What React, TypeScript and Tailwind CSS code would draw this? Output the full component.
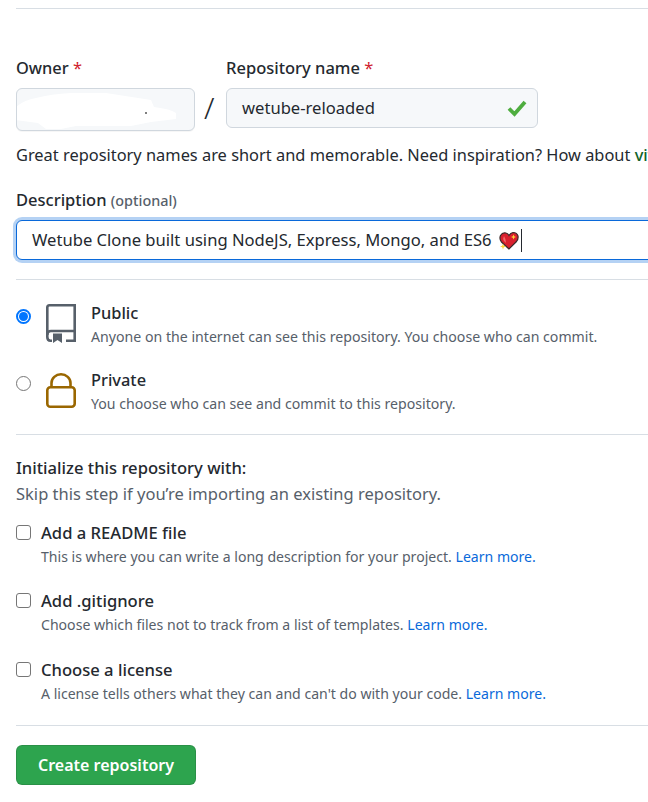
function BookIcon() {
  return (
    <svg width="30" height="39" viewBox="0 0 30 39" fill="none" className="shrink-0">
      <path d="M1.300 31V3.500Q1.300 1.300 3.500 1.300H28.700V36.700H20" stroke="#57606a" strokeWidth="2.600" />
      <path d="M1.300 31Q1.300 27 5 27H28.700" stroke="#57606a" strokeWidth="2.600" />
      <path d="M1.300 31V33Q1.300 36.700 4.500 36.700H6" stroke="#57606a" strokeWidth="2.600" />
      <path d="M7 29.500H16V39L11.500 36L7 39Z" fill="#57606a" />
    </svg>
  )
}

function LockIcon() {
  return (
    <svg width="30" height="35" viewBox="0 0 30 35" fill="none" className="shrink-0">
      <path d="M5.500 14V10A9.500 8.700 0 0 1 24.500 10V14" stroke="#9a6700" strokeWidth="2.600" />
      <rect x="1.300" y="14.300" width="27.400" height="19.400" rx="3" stroke="#9a6700" strokeWidth="2.600" />
    </svg>
  )
}

function Heart() {
  return (
    <svg width="20" height="19" viewBox="0 0 20 19" className="shrink-0">
      <path d="M10 18L2.500 11Q0 8 1.500 4.500Q3.500 1 7 2Q9 2.500 10 4.500Q11.500 2 14 1.500Q18 1.500 19 5Q19.500 8 17.500 10.500Z" fill="#d9202e" stroke="#3a2a2a" strokeWidth="1.200" />
      <path d="M5 5Q7 8 7 12L5 10Q3.500 7.500 5 5Z" fill="#f06a6a" />
      <path d="M14.500 3.500L15.200 5.300L17 6L15.200 6.700L14.500 8.500L13.800 6.700L12 6L13.800 5.300Z" fill="#ffd83a" />
      <path d="M4 12.500L4.800 14.700L7 15.500L4.800 16.300L4 18.500L3.200 16.300L1 15.500L3.200 14.700Z" fill="#ffd83a" />
    </svg>
  )
}

function InitOption({ title, desc, link }: { title: string; desc: string; link: string }) {
  return (
    <div className="flex h-[48px] items-start">
      <span className="mt-[4px] h-[15px] w-[15px] shrink-0 rounded-[3px] border border-[#767676] bg-white" />
      <div className="ml-[10px]">
        <div className="text-[16.600px] leading-[24px] font-medium text-[#24292f]">{title}</div>
        <div className="text-[14.080px] leading-[24px] whitespace-nowrap text-[#57606a]">
          {desc} <span className="text-[#0969da]">{link}</span>
        </div>
      </div>
    </div>
  )
}

export default function App() {
  return (
    <div className="h-[802px] w-[648px] overflow-hidden bg-white pl-[16px] font-['Noto_Sans','Open_Sans',sans-serif] text-[#24292f]">
      <div className="h-[9px] border-b border-[#d8dee4]" />

      <div className="mt-[47px] flex items-start">
        <div className="w-[179px]">
          <div className="text-[16.400px] leading-[24px] font-medium">
            Owner <span className="font-normal text-[#cf222e]">*</span>
          </div>
          <div className="relative mt-[8px] h-[43px] overflow-hidden rounded-[6px] border border-[#d0d7de] bg-[#f6f8fa] shadow-[0_1px_0_rgba(27,31,36,0.04)]">
            {/* redacted owner name */}
            <svg width="179" height="43" viewBox="0 0 179 43" className="absolute -top-px -left-px">
              <path d="M0 19Q8 12 20 10Q35 6 55 5H90L135 12L138 19Q155 21 160 25V31L135 34L115 38H60L45 41H30L22 35L0 32Z" fill="#ffffff" />
              <circle cx="130" cy="25" r="1" fill="#555555" />
            </svg>
          </div>
        </div>
        <div className="mt-[36px] w-[31px] pl-[9px] text-[30px] leading-[32px] font-light text-[#24292f]">/</div>
        <div className="w-[312px]">
          <div className="text-[16.500px] leading-[24px] font-medium">
            Repository name <span className="font-normal text-[#cf222e]">*</span>
          </div>
          <div className="mt-[8px] flex h-[40px] items-center justify-between rounded-[6px] border border-[#d0d7de] bg-[#f6f8fa] pr-[10px] pl-[15px] text-[16.600px]">
            <span>wetube-reloaded</span>
            <svg width="20" height="18" viewBox="0 0 20 18" fill="none">
              <path d="M2 9.500L7.500 15L18 3" stroke="#4ead3f" strokeWidth="3.800" />
            </svg>
          </div>
        </div>
      </div>

      <div className="mt-[12px] text-[16.400px] leading-[24px] whitespace-nowrap text-[#24292f]">
        Great repository names are short and memorable. Need inspiration? How about <span className="font-medium text-[#116329]">vivid-spoon</span>
      </div>

      <div className="mt-[21px] text-[16.500px] leading-[24px] font-medium">
        Description <span className="text-[14.400px] text-[#57606a]">(optional)</span>
      </div>
      <div className="mt-[7px] flex h-[40px] w-[700px] items-center rounded-[6px] border border-[#0969da] bg-white pl-[15px] text-[16.600px] shadow-[0_0_0_3px_rgba(9,105,218,0.3)]">
        <span className="whitespace-nowrap">Wetube Clone built using NodeJS, Express, Mongo, and ES6</span>
        <span className="ml-[7px]"><Heart /></span>
        <span className="ml-[2px] h-[23px] w-px bg-[#24292f]" />
      </div>

      <div className="mt-[19px] h-px bg-[#d8dee4]" />

      <div className="mt-[21px] flex h-[67px] items-start">
        <span className="mt-[8px] flex h-[15px] w-[15px] shrink-0 items-center justify-center rounded-full border-2 border-[#0075ff] bg-white">
          <span className="h-[9px] w-[9px] rounded-full bg-[#0075ff]" />
        </span>
        <div className="mt-[3px] ml-[15px]"><BookIcon /></div>
        <div className="ml-[15px]">
          <div className="text-[16.400px] leading-[24px] font-medium">Public</div>
          <div className="text-[14.150px] leading-[24px] whitespace-nowrap text-[#57606a]">Anyone on the internet can see this repository. You choose who can commit.</div>
        </div>
      </div>

      <div className="flex h-[66px] items-start">
        <span className="mt-[8px] h-[15px] w-[15px] shrink-0 rounded-full border border-[#767676] bg-white" />
        <div className="mt-[5px] ml-[15px]"><LockIcon /></div>
        <div className="ml-[15px]">
          <div className="text-[16.400px] leading-[24px] font-medium">Private</div>
          <div className="text-[14.150px] leading-[24px] whitespace-nowrap text-[#57606a]">You choose who can see and commit to this repository.</div>
        </div>
      </div>

      <div className="h-px bg-[#d8dee4]" />

      <div className="mt-[21px] text-[16.600px] leading-[24px] font-medium">Initialize this repository with:</div>
      <div className="mt-[2px] text-[16.500px] leading-[24px] text-[#57606a]">Skip this step if you’re importing an existing repository.</div>

      <div className="mt-[15px] flex flex-col gap-[20px]">
        <InitOption title="Add a README file" desc="This is where you can write a long description for your project." link="Learn more." />
        <InitOption title="Add .gitignore" desc="Choose which files not to track from a list of templates." link="Learn more." />
        <div className="mt-[1px]">
          <InitOption title="Choose a license" desc="A license tells others what they can and can't do with your code." link="Learn more." />
        </div>
      </div>

      <div className="mt-[19px] h-px bg-[#d8dee4]" />

      <button className="mt-[19px] h-[40px] w-[180px] rounded-[6px] border border-[rgba(27,31,36,0.15)] bg-[#2da44e] text-[16px] font-semibold text-white">
        Create repository
      </button>
    </div>
  )
}
